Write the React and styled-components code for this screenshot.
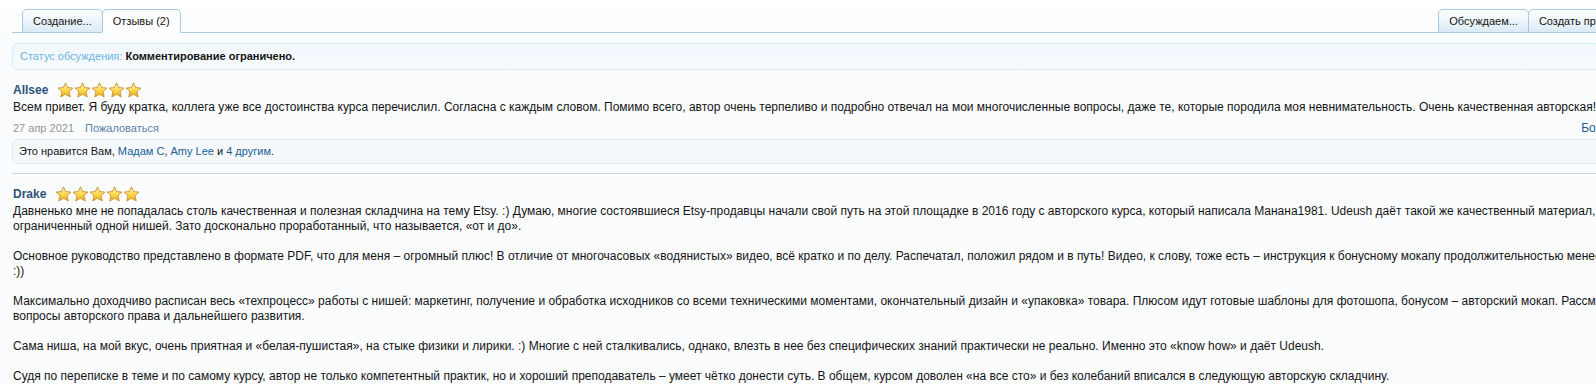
import React from 'react';
import styled, { createGlobalStyle } from 'styled-components';

const GlobalStyle = createGlobalStyle`
  html, body {
    margin: 0;
    padding: 0;
    overflow: hidden;
    background: #fbfcfe;
  }
  body {
    font-family: "Liberation Sans", Arial, sans-serif;
    font-size: 12px;
    color: #141414;
  }
`;

const Page = styled.div`
  width: 1613px;
  padding: 9px 0 0 12px;
  background: linear-gradient(to bottom, #ffffff 0px, #fbfcfe 34px);
`;

const TabBar = styled.div`
  display: flex;
  align-items: flex-end;
  height: 23px;
  padding: 0 10px;
  border-bottom: 1px solid #a5cae4;
`;

const TabGroup = styled.div`
  display: flex;
  margin-left: ${(p) => (p.$right ? 'auto' : '0')};
`;

const Tab = styled.div`
  height: 22px;
  line-height: 22px;
  padding: 0 10px;
  margin-bottom: -1px;
  font-size: 11px;
  color: #141414;
  border: 1px solid #a5cae4;
  border-radius: 5px 5px 0 0;
  margin-right: -1px;
  background: ${(p) =>
    p.$active
      ? '#ffffff'
      : 'linear-gradient(to bottom, #ffffff 0%, #dbeaf6 100%)'};
  border-bottom-color: ${(p) => (p.$active ? '#ffffff' : '#a5cae4')};
  white-space: nowrap;
`;

const StatusBox = styled.div`
  margin-top: 10px;
  height: 25px;
  line-height: 25px;
  padding: 0 7px;
  border: 1px solid #d7edfc;
  border-radius: 5px;
  background: linear-gradient(to bottom, #f0f7fc 0%, #f7fbfe 100%);
  font-size: 11px;
`;

const StatusLabel = styled.span`
  color: #6cb2e4;
`;

const StatusValue = styled.b`
  color: #141414;
`;

const Post = styled.div`
  padding: 11px 0 9px 1px;
  border-bottom: ${(p) => (p.$last ? 'none' : '1px solid #c9d8e8')};
`;

const PostHeader = styled.div`
  display: flex;
  align-items: center;
  gap: 9px;
  height: 17px;
`;

const UserName = styled.a`
  font-weight: bold;
  font-size: 12px;
  color: #2f5377;
  text-decoration: none;
`;

const Stars = styled.div`
  display: flex;
`;

const MessageText = styled.div`
  margin-top: 2px;
  line-height: 15px;
  white-space: nowrap;
`;

const PostFooter = styled.div`
  display: flex;
  align-items: center;
  margin-top: 6px;
  line-height: 15px;
  font-size: 11px;
`;

const DateText = styled.span`
  color: #969696;
  margin-right: 11px;
`;

const FooterLink = styled.a`
  color: #5a7fa6;
  text-decoration: none;
  margin-left: ${(p) => (p.$right ? 'auto' : '0')};
  ${(p) => (p.$right ? 'color: #176093; font-size: 12px;' : '')}
`;

const LikesBox = styled.div`
  margin: 3px 0 0 -1px;
  height: 23px;
  line-height: 23px;
  padding: 0 6px;
  border: 1px solid #d7edfc;
  border-radius: 5px;
  background: #f5f9fd;
  font-size: 11px;
`;

const LikeLink = styled.a`
  color: #176093;
  text-decoration: none;
`;

const Star = () => (
  <svg width="17" height="16" viewBox="0 0 17 16">
    <defs>
      <linearGradient id="starFill" x1="0" y1="0" x2="0" y2="1">
        <stop offset="0" stopColor="#fff8c8" />
        <stop offset="0.55" stopColor="#fbd84a" />
        <stop offset="1" stopColor="#eaa91c" />
      </linearGradient>
    </defs>
    <polygon
      points="8.5,0.8 10.7,5.6 15.9,6.1 12,9.6 13.2,14.9 8.5,12.2 3.8,14.9 5,9.6 1.1,6.1 6.3,5.6"
      fill="url(#starFill)"
      stroke="#c98f2b"
      strokeWidth="0.9"
      strokeLinejoin="round"
    />
  </svg>
);

const Rating = () => (
  <Stars>
    {[0, 1, 2, 3, 4].map((i) => (
      <Star key={i} />
    ))}
  </Stars>
);

const drakeLines = [
  'Давненько мне не попадалась столь качественная и полезная складчина на тему Etsy. :) Думаю, многие состоявшиеся Etsy-продавцы начали свой путь на этой площадке в 2016 году с авторского курса, который написала Манана1981. Udeush даёт такой же качественный материал,',
  'ограниченный одной нишей. Зато досконально проработанный, что называется, «от и до».',
  '',
  'Основное руководство представлено в формате PDF, что для меня – огромный плюс! В отличие от многочасовых «водянистых» видео, всё кратко и по делу. Распечатал, положил рядом и в путь! Видео, к слову, тоже есть – инструкция к бонусному мокапу продолжительностью менее',
  ':))',
  '',
  'Максимально доходчиво расписан весь «техпроцесс» работы с нишей: маркетинг, получение и обработка исходников со всеми техническими моментами, окончательный дизайн и «упаковка» товара. Плюсом идут готовые шаблоны для фотошопа, бонусом – авторский мокап. Рассмотрены',
  'вопросы авторского права и дальнейшего развития.',
  '',
  'Сама ниша, на мой вкус, очень приятная и «белая-пушистая», на стыке физики и лирики. :) Многие с ней сталкивались, однако, влезть в нее без специфических знаний практически не реально. Именно это «know how» и даёт Udeush.',
  '',
  'Судя по переписке в теме и по самому курсу, автор не только компетентный практик, но и хороший преподаватель – умеет чётко донести суть. В общем, курсом доволен «на все сто» и без колебаний вписался в следующую авторскую складчину.',
];

const App = () => (
  <Page>
    <GlobalStyle />
    <TabBar>
      <TabGroup>
        <Tab>Создание...</Tab>
        <Tab $active>Отзывы (2)</Tab>
      </TabGroup>
      <TabGroup $right>
        <Tab>Обсуждаем...</Tab>
        <Tab>Создать пр...</Tab>
      </TabGroup>
    </TabBar>

    <StatusBox>
      <StatusLabel>Статус обсуждения:</StatusLabel>{' '}
      <StatusValue>Комментирование ограничено.</StatusValue>
    </StatusBox>

    <Post>
      <PostHeader>
        <UserName>Allsee</UserName>
        <Rating />
      </PostHeader>
      <MessageText>
        Всем привет. Я буду кратка, коллега уже все достоинства курса перечислил. Согласна с каждым словом. Помимо всего, автор очень терпеливо и подробно отвечал на мои многочисленные вопросы, даже те, которые породила моя невнимательность. Очень качественная авторская!
      </MessageText>
      <PostFooter>
        <DateText>27 апр 2021</DateText>
        <FooterLink>Пожаловаться</FooterLink>
        <FooterLink $right>Больше</FooterLink>
      </PostFooter>
      <LikesBox>
        Это нравится Вам, <LikeLink>Мадам С</LikeLink>, <LikeLink>Amy Lee</LikeLink> и{' '}
        <LikeLink>4 другим</LikeLink>.
      </LikesBox>
    </Post>

    <Post $last>
      <PostHeader>
        <UserName>Drake</UserName>
        <Rating />
      </PostHeader>
      <MessageText>
        {drakeLines.map((line, i) => (
          <React.Fragment key={i}>
            {line}
            {i < drakeLines.length - 1 && <br />}
          </React.Fragment>
        ))}
      </MessageText>
    </Post>
  </Page>
);

export default App;
